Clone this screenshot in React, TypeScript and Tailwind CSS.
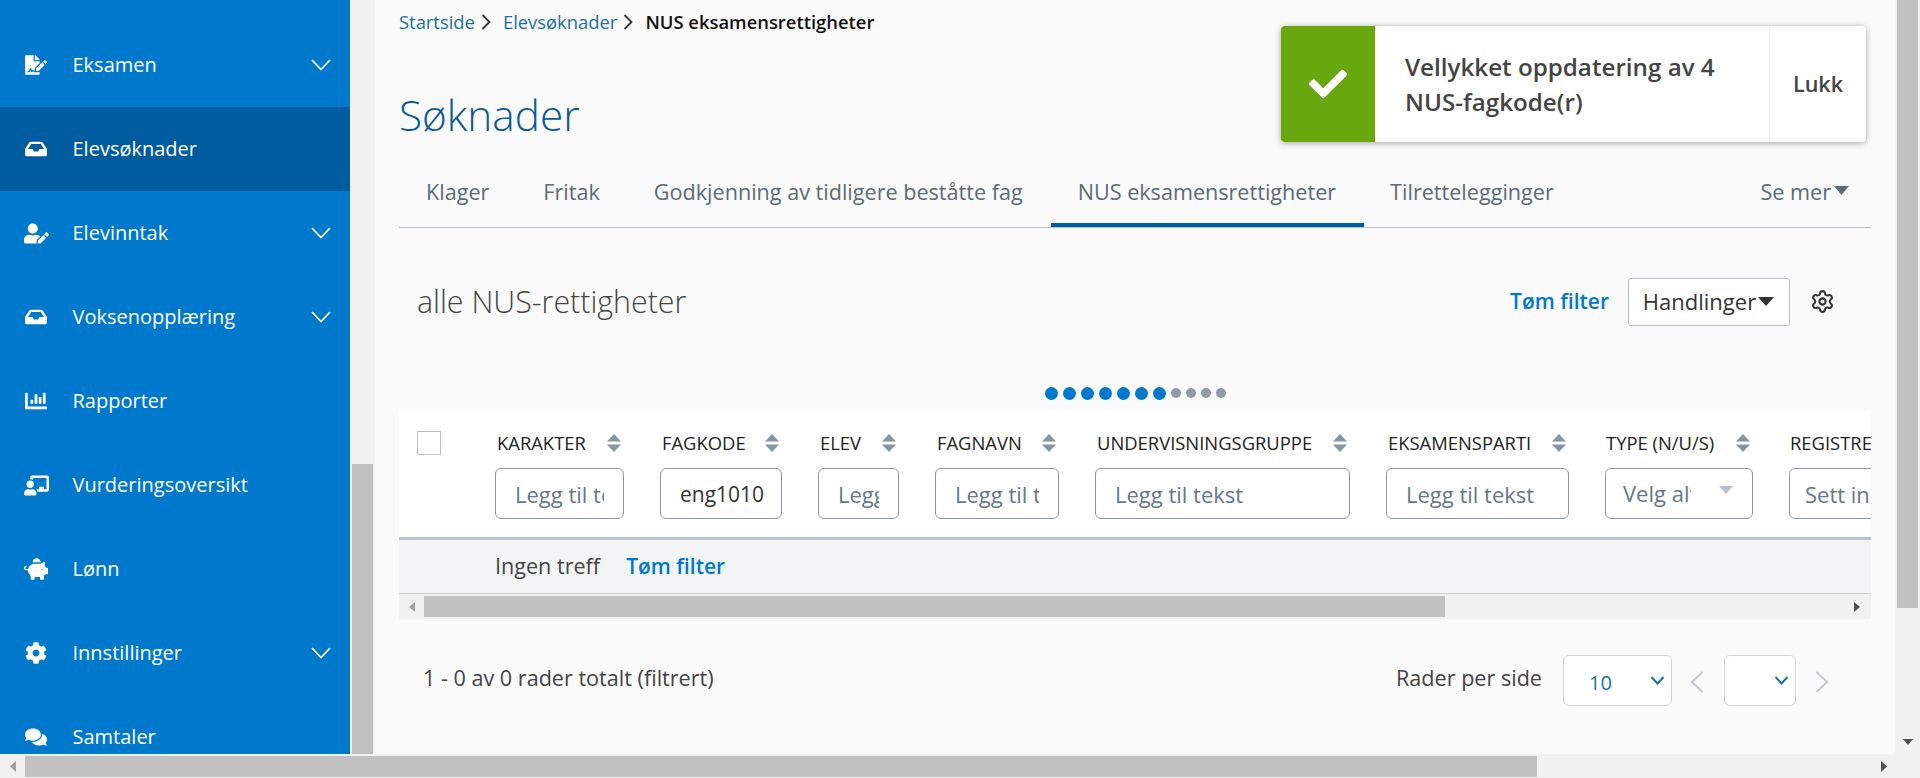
import React from "react";
import { FaFileSignature, FaInbox, FaUserEdit, FaChartBar, FaChalkboardTeacher, FaPiggyBank, FaCog, FaComments, FaCheck } from "react-icons/fa";
import { Settings } from "lucide-react";

const nav = [
  { label: "Eksamen", Icon: FaFileSignature, size: "text-[22px]", chev: true },
  { label: "Elevsøknader", Icon: FaInbox, size: "text-[22px]", active: true },
  { label: "Elevinntak", Icon: FaUserEdit, size: "text-[25px]", chev: true },
  { label: "Voksenopplæring", Icon: FaInbox, size: "text-[22px]", chev: true },
  { label: "Rapporter", Icon: FaChartBar, size: "text-[22px]" },
  { label: "Vurderingsoversikt", Icon: FaChalkboardTeacher, size: "text-[25px]" },
  { label: "Lønn", Icon: FaPiggyBank, size: "text-[24px]" },
  { label: "Innstillinger", Icon: FaCog, size: "text-[22px]", chev: true },
  { label: "Samtaler", Icon: FaComments, size: "text-[22px]" },
];

function Sort() {
  return (
    <svg width="14" height="18" viewBox="0 0 14 18" className="shrink-0" fill="#8496a5">
      <path d="M7 0 L14 7.5 H0 Z" />
      <path d="M0 10.5 H14 L7 18 Z" />
    </svg>
  );
}

function Crumb() {
  return (
    <svg width="10" height="16" viewBox="0 0 10 16" fill="none" stroke="#333" strokeWidth="1.8" className="shrink-0">
      <path d="M1.5 1 L8.5 8 L1.5 15" />
    </svg>
  );
}

function SelectChevron() {
  return (
    <svg width="15" height="9" viewBox="0 0 15 9" fill="none" stroke="#1a6fa8" strokeWidth="2" className="shrink-0">
      <path d="M1.5 1 L7.5 7.5 L13.5 1" />
    </svg>
  );
}

const cols = [
  { h: "KARAKTER", w: "w-[128.5px]", ph: "Legg til tekst" },
  { h: "FAGKODE", w: "w-[121.5px]", v: "eng1010" },
  { h: "ELEV", w: "w-[80.5px]", ph: "Legg til tekst" },
  { h: "FAGNAVN", w: "w-[123.5px]", ph: "Legg til tekst" },
  { h: "UNDERVISNINGSGRUPPE", w: "w-[254.5px]", ph: "Legg til tekst" },
  { h: "EKSAMENSPARTI", w: "w-[182.5px]", ph: "Legg til tekst" },
];

export default function App() {
  return (
    <div className="flex h-[778px] w-[1920px] flex-col overflow-hidden bg-[#fafafa] font-['Open_Sans',sans-serif]">
      <div className="flex h-[754px] min-h-0">
        <aside className="w-[350px] shrink-0 overflow-hidden bg-[#0078cc] pt-[23px] text-white">
          {nav.map(({ label, Icon, size, chev, active }) => (
            <div key={label} className={`flex h-[84px] items-center ${active ? "bg-[#005c9e]" : ""}`}>
              <span className="flex w-[72.5px] shrink-0 justify-center">
                <Icon className={size} />
              </span>
              <span className="flex-1 text-[20px]">{label}</span>
              {chev && (
                <svg width="20" height="12" viewBox="0 0 20 12" fill="none" stroke="#fff" strokeWidth="1.8" className="mr-[19px]">
                  <path d="M1 1 L10 10.5 L19 1" />
                </svg>
              )}
            </div>
          ))}
        </aside>
        <div className="flex w-[25px] shrink-0 flex-col bg-[#f1f1f1] pl-[2px] pr-[2px] pt-[464px]">
          <div className="flex-1 bg-[#c1c1c1]" />
        </div>

        <main className="relative min-w-0 flex-1 px-[24px]">
          <nav className="flex h-[44px] items-center text-[18.4px]">
            <span className="text-[#1a6fa8]">Startside</span>
            <span className="ml-[6px] mr-[12px]"><Crumb /></span>
            <span className="text-[#1a6fa8]">Elevsøknader</span>
            <span className="ml-[6px] mr-[12px]"><Crumb /></span>
            <span className="font-semibold text-[#111]">NUS eksamensrettigheter</span>
          </nav>
          <h1 className="mt-[42px] text-[42.3px] font-light leading-[58px] text-[#0b5a94]">Søknader</h1>

          <div className="mt-[20px] flex h-[64px] items-center border-b border-[#b5bfc9] pb-[7px] text-[21.6px] text-[#5a6b79]">
            <div className="relative flex h-[56px] items-center pl-[27px]">
              <span>Klager</span>
              <span className="ml-[54px]">Fritak</span>
              <span className="ml-[54px]">Godkjenning av tidligere beståtte fag</span>
              <span className="relative ml-[55px] flex h-full items-center">
                NUS eksamensrettigheter
                <span className="absolute -bottom-[7px] -left-[27px] -right-[28px] h-[4px] bg-[#005c9e]" />
              </span>
              <span className="ml-[54px]">Tilrettelegginger</span>
            </div>
            <div className="ml-auto flex items-center gap-[3px] pr-[22px]">
              <span>Se mer</span>
              <svg width="15" height="9" viewBox="0 0 15 9" fill="#5a6b79" className="mb-[3px]"><path d="M0 0 H15 L7.5 9 Z" /></svg>
            </div>
          </div>

          <div className="flex h-[150px] items-center pb-[3px] pl-[18px]">
            <h2 className="text-[30.4px] font-light text-[#444]">alle NUS-rettigheter</h2>
            <div className="ml-auto flex items-center">
              <span className="text-[21px] font-semibold text-[#0078cc]">Tøm filter</span>
              <div className="ml-[19px] flex h-[48px] w-[162px] items-center justify-center gap-[2px] rounded-[3px] border border-[#b5bfc9] bg-white pr-[1px] text-[22px] font-medium text-[#333]">
                Handlinger
                <svg width="16" height="9" viewBox="0 0 16 9" fill="#333"><path d="M0 0 H16 L8 9 Z" /></svg>
              </div>
              <Settings className="ml-[20px] mr-[36px] h-[25px] w-[25px] text-[#333]" strokeWidth={2} />
            </div>
          </div>

          <div className="flex h-[33px] items-center justify-center pb-[3px]">
            <div className="flex items-center gap-[5px]">
              {[0, 1, 2, 3, 4, 5, 6].map((i) => (
                <span key={i} className="h-[13px] w-[13px] rounded-full bg-[#0078cc]" />
              ))}
              {[0, 1, 2, 3].map((i) => (
                <span key={i} className="h-[10px] w-[10px] rounded-full bg-[#8f9ca7]" />
              ))}
            </div>
          </div>

          <div className="overflow-hidden">
            <div className="flex h-[129px] border-b-[3px] border-[#b8c4cf] bg-white pt-[20px]">
              <span className="ml-[18px] mr-[54px] h-[24px] w-[24px] shrink-0 border border-[#b5bfc9] bg-white" />
              <div className="flex gap-[36.5px]">
                {cols.map((c) => (
                  <div key={c.h} className={`shrink-0 ${c.w}`}>
                    <div className="flex h-[24px] items-center justify-between pl-[2px] pr-[3px] text-[18.4px] text-[#222]">
                      <span>{c.h}</span>
                      <Sort />
                    </div>
                    {c.v ? (
                      <input
                        readOnly
                        value={c.v}
                        className="mt-[13px] h-[51px] w-full rounded-[6px] border border-[#8a99a8] bg-white pl-[19px] pr-[6px] text-[21px] text-[#333] outline-none"
                      />
                    ) : (
                      <input
                        readOnly
                        placeholder={c.ph}
                        className="mt-[13px] h-[51px] w-full rounded-[6px] border border-[#8a99a8] bg-white px-[19px] text-[22px] outline-none placeholder:text-[#64788a]"
                      />
                    )}
                  </div>
                ))}
                <div className="w-[147.5px] shrink-0">
                  <div className="flex h-[24px] items-center justify-between pl-[1px] pr-[3px] text-[18.4px] text-[#222]">
                    <span>TYPE (N/U/S)</span>
                    <Sort />
                  </div>
                  <div className="mt-[13px] flex h-[51px] items-center overflow-hidden rounded-[6px] border border-[#8a99a8] bg-white pl-[17px] pr-[19px] text-[22px] text-[#64788a]">
                    <span className="w-[68px] overflow-hidden whitespace-nowrap">Velg alt</span>
                    <svg width="14" height="8" viewBox="0 0 14 8" fill="#b8c0c8" className="mb-[7px] ml-auto"><path d="M0 0 H14 L7 8 Z" /></svg>
                  </div>
                </div>
                <div className="w-[160px] shrink-0">
                  <div className="flex h-[24px] items-center pl-[1px] text-[18.4px] text-[#222]">
                    <span>REGISTRERT</span>
                  </div>
                  <input readOnly placeholder="Sett inn dato" className="mt-[13px] h-[51px] w-full rounded-[6px] border border-[#8a99a8] bg-white px-[15px] text-[22px] outline-none placeholder:text-[#64788a]" />
                </div>
              </div>
            </div>
            <div className="flex h-[54px] items-center border-b border-[#c9ced3] bg-[#f3f4f6] pl-[96px] text-[21.6px] text-[#444]">
              <span>Ingen treff</span>
              <span className="ml-[26px] text-[21px] font-semibold text-[#0078cc]">Tøm filter</span>
            </div>
            <div className="flex h-[25px] items-stretch bg-[#f1f1f1] py-[2px]">
              <span className="flex w-[25px] items-center justify-center">
                <svg width="6" height="10" viewBox="0 0 6 10" fill="#a0a0a0"><path d="M6 0 V10 L0 5 Z" /></svg>
              </span>
              <span className="w-[1021px] bg-[#c1c1c1]" />
              <span className="flex flex-1 items-center justify-end pr-[11px]">
                <svg width="6" height="10" viewBox="0 0 6 10" fill="#505050"><path d="M0 0 V10 L6 5 Z" /></svg>
              </span>
            </div>
          </div>

          <div className="mt-[36px] flex items-center pl-[24px] pr-[42px]">
            <span className="mb-[5px] text-[21.6px] text-[#444]">1 - 0 av 0 rader totalt (filtrert)</span>
            <div className="ml-auto flex items-center">
              <span className="mb-[5px] text-[21.6px] text-[#444]">Rader per side</span>
              <div className="ml-[21px] flex h-[51px] w-[109px] items-center rounded-[6px] border border-[#cfd4d8] bg-white pl-[25px] pr-[6px] text-[20px] text-[#1a6fa8]">
                <span className="mt-[4px]">10</span>
                <span className="ml-auto"><SelectChevron /></span>
              </div>
              <svg width="14" height="22" viewBox="0 0 14 22" fill="none" stroke="#c5cbd0" strokeWidth="2.2" className="ml-[18px] mt-[2px]">
                <path d="M12.5 1 L2 11 L12.5 21" />
              </svg>
              <div className="ml-[20px] flex h-[51px] w-[72px] items-center justify-end rounded-[6px] border border-[#cfd4d8] bg-white pr-[6px]">
                <SelectChevron />
              </div>
              <svg width="14" height="22" viewBox="0 0 14 22" fill="none" stroke="#c5cbd0" strokeWidth="2.2" className="ml-[19px] mt-[2px]">
                <path d="M1.5 1 L12 11 L1.5 21" />
              </svg>
            </div>
          </div>

          <div className="absolute left-[906px] top-[26px] flex h-[116px] w-[585px] overflow-hidden rounded-[4px] bg-white shadow-[0_1px_6px_rgba(0,0,0,0.35)]">
            <div className="flex w-[94px] shrink-0 items-center justify-center bg-[#69a70f]">
              <FaCheck className="text-[38px] text-white" />
            </div>
            <div className="flex flex-1 items-center pl-[30px] text-[24.2px] font-semibold leading-[35px] text-[#444]">
              <p>Vellykket oppdatering av 4<br />NUS-fagkode(r)</p>
            </div>
            <div className="flex w-[97px] shrink-0 items-center justify-center border-l border-[#f4f4f4] text-[21.6px] font-semibold text-[#444]">
              Lukk
            </div>
          </div>
        </main>

        <div className="relative flex w-[25px] shrink-0 flex-col bg-[#f1f1f1] px-[2px]">
          <div className="h-[608px] bg-[#c1c1c1]" />
          <svg width="10" height="6" viewBox="0 0 10 6" fill="#505050" className="absolute bottom-[9px] left-[8px]"><path d="M0 0 H10 L5 6 Z" /></svg>
        </div>
      </div>

      <div className="flex h-[24px] shrink-0 items-stretch bg-[#f1f1f1] pb-[1px] pt-[2px]">
        <span className="flex w-[25px] items-center justify-center">
          <svg width="6" height="11" viewBox="0 0 6 11" fill="#a0a0a0"><path d="M6 0 V11 L0 5.5 Z" /></svg>
        </span>
        <span className="w-[1512px] bg-[#c1c1c1]" />
        <span className="flex flex-1 items-center justify-end pr-[33px]">
          <svg width="6" height="11" viewBox="0 0 6 11" fill="#505050"><path d="M0 0 V11 L6 5.5 Z" /></svg>
        </span>
      </div>
    </div>
  );
}
